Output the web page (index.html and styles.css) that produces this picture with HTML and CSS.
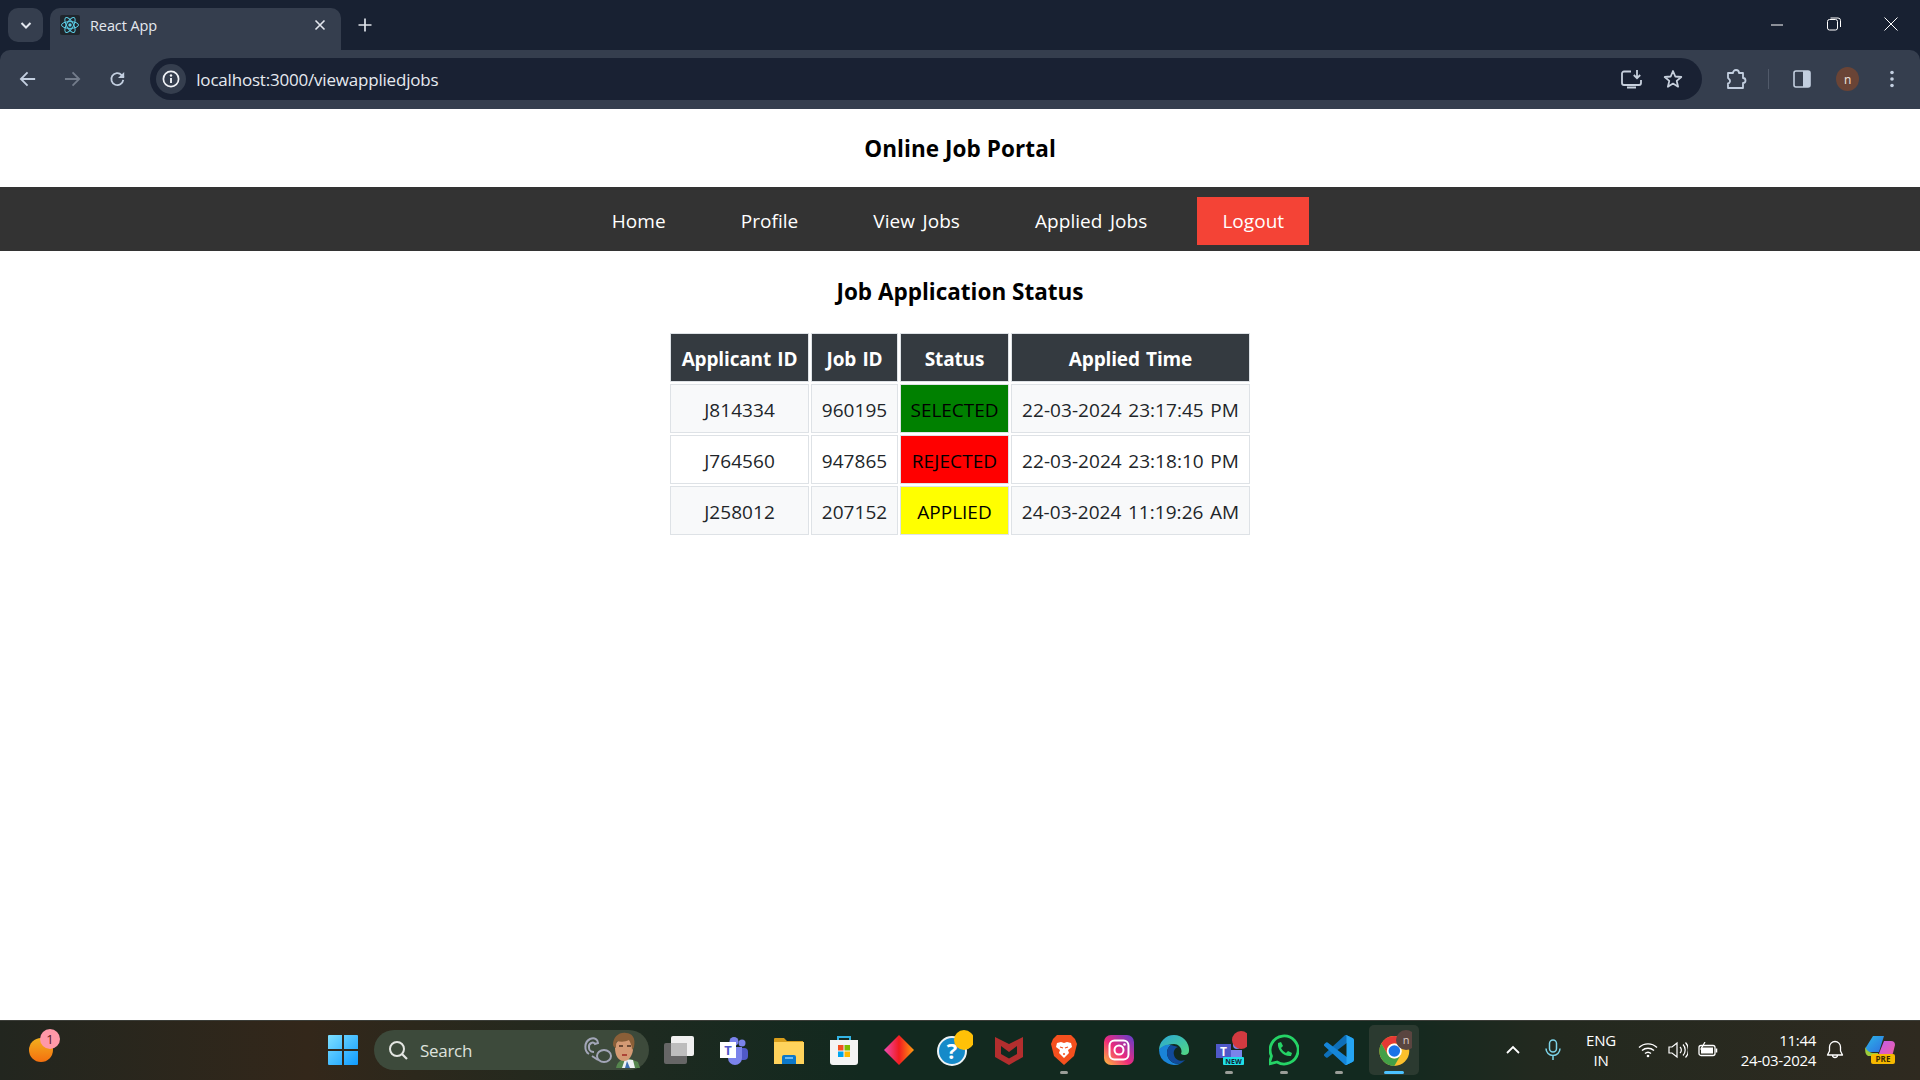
FILE: index.html
```html
<!DOCTYPE html>
<html lang="en">
<head>
<meta charset="utf-8">
<title>React App</title>
<link rel="stylesheet" href="styles.css">
</head>
<body>
<header class="browser">
  <div class="tabstrip">
    <button class="tab-search"><svg width="14" height="14" viewBox="0 0 14 14"><path d="M2.5 5 7 9.5 11.5 5" fill="none" stroke="#e3e7ee" stroke-width="2"/></svg></button>
    <div class="tab">
      <span class="favicon"><svg width="20" height="20" viewBox="0 0 20 20"><rect width="20" height="20" rx="2" fill="#20262c"/><g fill="none" stroke="#5ccfe6" stroke-width="1"><ellipse cx="10" cy="10" rx="8.5" ry="3.4"/><ellipse cx="10" cy="10" rx="8.5" ry="3.4" transform="rotate(60 10 10)"/><ellipse cx="10" cy="10" rx="8.5" ry="3.4" transform="rotate(120 10 10)"/></g><circle cx="10" cy="10" r="1.7" fill="#5ccfe6"/></svg></span>
      <span class="tab-title">React App</span>
      <svg class="tab-close" width="12" height="12" viewBox="0 0 12 12"><path d="M1.5 1.5l9 9M10.5 1.5l-9 9" stroke="#e3e7ee" stroke-width="1.6"/></svg>
    </div>
    <svg class="new-tab" width="14" height="14" viewBox="0 0 14 14"><path d="M7 .5v13M.5 7h13" stroke="#dfe3ea" stroke-width="1.7"/></svg>
    <div class="window-controls">
      <svg width="14" height="14" viewBox="0 0 14 14"><path d="M1 8h12" stroke="#fff"/></svg>
      <svg width="14" height="14" viewBox="0 0 14 14"><rect x=".5" y="2.5" width="10" height="10.5" rx="2" fill="none" stroke="#fff"/><path d="M3.5 1H11a2.5 2.5 0 0 1 2.5 2.5V10" fill="none" stroke="#fff"/></svg>
      <svg width="14" height="14" viewBox="0 0 14 14"><path d="M.5.5l13 13M13.5.5l-13 13" stroke="#fff"/></svg>
    </div>
  </div>
  <div class="toolbar">
    <svg class="nav-btn" width="18" height="18" viewBox="0 0 18 18"><path d="M17 9H2M9 2 2 9l7 7" fill="none" stroke="#c3cfe0" stroke-width="1.9"/></svg>
    <svg class="nav-btn" width="18" height="18" viewBox="0 0 18 18"><path d="M1 9h15M9 2l7 7-7 7" fill="none" stroke="#737c8b" stroke-width="1.9"/></svg>
    <svg class="nav-btn" width="18" height="18" viewBox="0 0 18 18"><path d="M15 10a6.3 6.3 0 1 1-1.7-5.2L15.5 7" fill="none" stroke="#c3cfe0" stroke-width="1.9"/><path d="M16 1.5V8H9.5z" fill="#c3cfe0"/></svg>
    <div class="omnibox">
      <span class="info-bubble"><svg width="18" height="18" viewBox="0 0 18 18"><circle cx="9" cy="9" r="7.6" fill="none" stroke="#f0f2f6" stroke-width="1.7"/><path d="M9 8v5" stroke="#f0f2f6" stroke-width="1.9"/><circle cx="9" cy="5.5" r="1.2" fill="#f0f2f6"/></svg></span>
      <span class="url">localhost:3000/viewappliedjobs</span>
      <svg width="22" height="20" viewBox="0 0 22 20"><path d="M10 2.5H3a2 2 0 0 0-2 2V14a2 2 0 0 0 2 2h15a2 2 0 0 0 2-2v-3" fill="none" stroke="#c7d0dd" stroke-width="1.8"/><path d="M6 18.500h9" stroke="#c7d0dd" stroke-width="2"/><path d="M16 1v8M12.800 6l3.200 3.200L19.200 6" fill="none" stroke="#c7d0dd" stroke-width="1.800"/></svg>
      <svg width="20" height="20" viewBox="0 0 20 20"><path d="M10 2l2.300 5.500 6 .5-4.600 3.900 1.400 5.800L10 14.600 4.900 17.700l1.400-5.800L1.700 8l6-.5z" fill="none" stroke="#c7d0dd" stroke-width="1.800" stroke-linejoin="round"/></svg>
    </div>
    <svg class="tool ext" width="22" height="22" viewBox="0 0 22 22"><path d="M3 5h5a3 3 0 0 1 6 0h4v5a2.500 2.500 0 0 1 0 5v5H3v-4.500a2.500 2.500 0 0 0 1-4.500 2.500 2.500 0 0 0-1-1z" fill="none" stroke="#c3cfe0" stroke-width="1.800" stroke-linejoin="round"/></svg>
    <span class="divider"></span>
    <svg class="tool" width="18" height="18" viewBox="0 0 18 18"><rect x="1" y="1" width="16" height="16" rx="2" fill="none" stroke="#c3cfe0" stroke-width="1.600"/><path d="M10 1h5.500A1.500 1.500 0 0 1 17 2.500v13a1.500 1.500 0 0 1-1.500 1.500H10z" fill="#c3cfe0"/></svg>
    <span class="avatar">n</span>
    <svg class="tool menu" width="6" height="18" viewBox="0 0 6 18"><circle cx="3" cy="2.500" r="1.800" fill="#c3cfe0"/><circle cx="3" cy="9" r="1.800" fill="#c3cfe0"/><circle cx="3" cy="15.500" r="1.800" fill="#c3cfe0"/></svg>
  </div>
</header>

<div class="page">
  <h1 class="site-title">Online Job Portal</h1>
  <nav class="site-nav">
    <a class="nav-link">Home</a>
    <a class="nav-link">Profile</a>
    <a class="nav-link">View Jobs</a>
    <a class="nav-link">Applied Jobs</a>
    <a class="nav-link logout">Logout</a>
  </nav>
  <h2 class="section-title">Job Application Status</h2>
  <table class="jobs">
    <colgroup><col class="c1"><col class="c2"><col class="c3"><col class="c4"></colgroup>
    <thead><tr><th>Applicant ID</th><th>Job ID</th><th>Status</th><th>Applied Time</th></tr></thead>
    <tbody>
      <tr class="odd"><td>J814334</td><td>960195</td><td class="selected">SELECTED</td><td>22-03-2024 23:17:45 PM</td></tr>
      <tr><td>J764560</td><td>947865</td><td class="rejected">REJECTED</td><td>22-03-2024 23:18:10 PM</td></tr>
      <tr class="odd"><td>J258012</td><td>207152</td><td class="applied">APPLIED</td><td>24-03-2024 11:19:26 AM</td></tr>
    </tbody>
  </table>
</div>

<footer class="taskbar">
  <div class="widgets">
    <svg class="over-free" width="36" height="36" viewBox="0 0 36 36"><defs><linearGradient id="wg" x1="0" y1="0" x2="0" y2="1"><stop offset="0" stop-color="#f2b01e"/><stop offset="1" stop-color="#f4700f"/></linearGradient></defs><circle cx="14" cy="18" r="12" fill="url(#wg)"/><circle cx="23" cy="7" r="10" fill="#ff98a8"/><text x="23" y="11.500" class="svg-badge" text-anchor="middle">1</text></svg>
  </div>
  <div class="center">
    <svg class="start" width="30" height="30" viewBox="0 0 30 30"><defs><linearGradient id="win" x1="0" y1="0" x2="1" y2="1"><stop offset="0" stop-color="#7ee0ff"/><stop offset="1" stop-color="#0f9bff"/></linearGradient></defs><path d="M0 1a1 1 0 0 1 1-1h13v14H0zM16 0h13a1 1 0 0 1 1 1v13H16zM0 16h14v14H1a1 1 0 0 1-1-1zM16 16h14v13a1 1 0 0 1-1 1H16z" fill="url(#win)"/></svg>
    <div class="search">
      <svg width="22" height="22" viewBox="0 0 22 22"><circle cx="10" cy="10" r="7" fill="none" stroke="#e4e6e2" stroke-width="2"/><path d="M15 15l5 5" stroke="#e4e6e2" stroke-width="2.200"/></svg>
      <span class="search-text">Search</span>
      <svg class="search-art" width="58" height="36" viewBox="0 0 58 36"><g fill="none" stroke="#a3a6b8" stroke-width="2"><path d="M7 22c-5-3-5-12 1-15 5-2 8 1 8 4l-3 1c-1-3-7-1-6 4 0 3 3 4 5 4"/><ellipse cx="22" cy="24" rx="7" ry="6"/><path d="M10 24l6 4"/></g><path d="M34 36c1-6 5-9 12-10l10 4 2 6z" fill="#55854e"/><path d="M40 36l3-9 8 1 2 8z" fill="#eef1f4"/><path d="M45 29l3 7h-5z" fill="#3f6fb0"/><path d="M33 16c0-6 4-9 10-9s9 4 8 11c-1 6-4 11-9 11-6 0-9-6-9-13z" fill="#d49a74"/><path d="M31 13C31 5 37 0 44 1c6 0 10 5 8 14l-2 3c0-5-2-8-3-10-4 2-8 2-12 1-1 2-1 4-1 7l-2-1z" fill="#8a5f38"/><path d="M37 14h4M45 14h4" stroke="#4a3020" stroke-width="1.400"/><path d="M40 23h5" stroke="#a83a30" stroke-width="1.800"/></svg>
    </div>
    <span class="task"><svg width="30" height="30" viewBox="0 0 30 30"><rect x="0" y="8" width="23" height="21" rx="2" fill="#666"/><rect x="7" y="1" width="23" height="20" rx="2" fill="#f0f0f0"/><rect x="7" y="8" width="16" height="13" fill="#bdbdbd"/></svg></span>
    <span class="task"><svg width="30" height="30" viewBox="0 0 30 30"><circle cx="23" cy="8" r="3.500" fill="#7b83eb"/><rect x="19" y="13" width="10" height="12" rx="4" fill="#5059c9"/><circle cx="15" cy="6.500" r="4.500" fill="#7b83eb"/><path d="M9 12h14v11a7 7 0 0 1-14 0z" fill="#7b83eb"/><rect x="1" y="7" width="16" height="16" fill="#fff"/><text x="9" y="20" class="svg-t" text-anchor="middle">T</text></svg></span>
    <span class="task"><svg width="30" height="30" viewBox="0 0 30 30"><path d="M0 4a1 1 0 0 1 1-1h9l3 3h16v4H0z" fill="#d99e1b"/><path d="M0 7h30v22H0z" fill="#ffd35c"/><path d="M8 29v-7a2 2 0 0 1 2-2h10a2 2 0 0 1 2 2v7z" fill="#0c78c9"/><path d="M11 23h8" stroke="#8fd0ff" stroke-width="1.500"/></svg></span>
    <span class="task"><svg width="30" height="32" viewBox="0 0 30 32"><path d="M9 6V3h12v3" fill="none" stroke="#33b5e5" stroke-width="2"/><path d="M1 6h28v22a3 3 0 0 1-3 3H4a3 3 0 0 1-3-3z" fill="#f4f4f4"/><rect x="9" y="11" width="5.500" height="5.500" fill="#f25022"/><rect x="15.500" y="11" width="5.500" height="5.500" fill="#7fba00"/><rect x="9" y="17.500" width="5.500" height="5.500" fill="#00a4ef"/><rect x="15.500" y="17.500" width="5.500" height="5.500" fill="#ffb900"/></svg></span>
    <span class="task"><svg width="30" height="30" viewBox="0 0 30 30"><defs><linearGradient id="dm" x1="0" y1="0" x2="1" y2="0"><stop offset="0" stop-color="#ee4bb5"/><stop offset=".5" stop-color="#f21c20"/><stop offset="1" stop-color="#ff9c10"/></linearGradient></defs><path d="M15 0l15 15-15 15L0 15z" fill="url(#dm)"/></svg></span>
    <span class="task"><svg class="over" width="38" height="40" viewBox="0 0 38 40"><circle cx="17" cy="23" r="14" fill="#158ac9" stroke="#eef3f5" stroke-width="2"/><text x="17" y="31" class="svg-q" text-anchor="middle">?</text><circle cx="29" cy="12" r="10" fill="#ffc107"/></svg></span>
    <span class="task"><svg width="28" height="30" viewBox="0 0 28 30"><path d="M0 2l14 7 14-7v20l-14 8-14-8z" fill="#b32e2e"/><path d="M6 11l8 6 8-6v8l-8 4.500L6 19z" fill="#12291f"/></svg></span>
    <span class="task on"><svg width="26" height="30" viewBox="0 0 26 30"><path d="M6 0h14l4 4 2 5-3 12-10 9-10-9L0 9l2-5z" fill="#f4501e"/><path d="M6 8l4-1 3 1 3-1 4 1 1 4-4 3 1 3-5 5-5-5 1-3-4-3z" fill="#fff"/><path d="M9 12l3 1M17 12l-3 1M12 19h2" stroke="#f4501e" stroke-width="1.300"/></svg></span>
    <span class="task"><svg width="30" height="30" viewBox="0 0 30 30"><defs><linearGradient id="ig" x1="0" y1="1" x2="1" y2="0"><stop offset="0" stop-color="#ffc13a"/><stop offset=".45" stop-color="#ee2a7b"/><stop offset="1" stop-color="#5b3fd0"/></linearGradient></defs><rect width="30" height="30" rx="7" fill="url(#ig)"/><rect x="5.500" y="5.500" width="19" height="19" rx="5" fill="none" stroke="#fff" stroke-width="2"/><circle cx="15" cy="15" r="4.500" fill="none" stroke="#fff" stroke-width="2"/><circle cx="20.500" cy="9.500" r="1.300" fill="#fff"/></svg></span>
    <span class="task"><svg width="30" height="30" viewBox="0 0 30 30"><defs><linearGradient id="ed" x1="0" y1="0" x2="1" y2="1"><stop offset="0" stop-color="#2aa6d8"/><stop offset="1" stop-color="#52d87f"/></linearGradient></defs><path d="M15 0A15 15 0 0 1 30 16c0 4-5 5-8 3 2-5-2-10-7-10C8 9 2 13 0 15A15 15 0 0 1 15 0z" fill="url(#ed)"/><path d="M0 15c2-4 8-6 12-5-5 3-6 12 1 17 3 2 8 3 12-1A15 15 0 0 1 0 15z" fill="#1a84d8"/><path d="M12 10c-5 3-6 12 1 17 5 3 10 2 13-2-4 2-10 0-11-5-1-4 1-7 4-8z" fill="#114a9a"/></svg></span>
    <span class="task on"><svg class="over" width="36" height="40" viewBox="0 0 36 40"><circle cx="26" cy="17" r="4" fill="#7b83eb"/><path d="M18 22h13v10H18z" fill="#7b83eb"/><rect x="5" y="16" width="15" height="14" fill="#5059c9"/><text x="12.500" y="27.500" class="svg-t light" text-anchor="middle">T</text><rect x="12" y="29" width="21" height="8" rx="1" fill="#1fe0e8"/><text x="22.500" y="35.700" class="svg-new" text-anchor="middle">NEW</text><circle cx="30" cy="12" r="9" fill="#d23a40"/></svg></span>
    <span class="task on"><svg width="30" height="32" viewBox="1 0 30 32"><path d="M1 30l2.500-8A14 14 0 1 1 9 28z" fill="none" stroke="#25d366" stroke-width="2.800" stroke-linejoin="round"/><path d="M10 9l3-1 2 4-2 2c1 2 3 4 5 5l2-2 4 2-1 3c-7 1-14-6-13-13z" fill="#25d366"/></svg></span>
    <span class="task on"><svg width="30" height="30" viewBox="0 0 100 100"><path d="M96.461 10.796L75.857.876a6.230 6.230 0 0 0-7.107 1.207L1.299 63.537a4.167 4.167 0 0 0 .004 6.162l5.510 5.009a4.167 4.167 0 0 0 5.320.236L93.361 13.370c2.720-2.064 6.627-.124 6.627 3.290v-.240a6.250 6.250 0 0 0-3.527-5.624z" fill="#0e6fb8"/><path d="M96.461 89.204l-20.604 9.920a6.230 6.230 0 0 1-7.107-1.207L1.299 36.463a4.167 4.167 0 0 1 .004-6.162l5.510-5.009a4.167 4.167 0 0 1 5.320-.236L93.361 86.630c2.720 2.064 6.627.124 6.627-3.290v.240a6.250 6.250 0 0 1-3.527 5.624z" fill="#1585d8"/><path d="M75.858 99.126a6.232 6.232 0 0 1-7.108-1.210c2.306 2.307 6.250.674 6.250-2.588V4.672c0-3.262-3.944-4.895-6.250-2.589a6.232 6.232 0 0 1 7.108-1.210l20.600 9.908A6.250 6.250 0 0 1 100 16.413v67.174a6.250 6.250 0 0 1-3.541 5.633z" fill="#25a5f3"/></svg></span>
    <span class="task active"><svg class="over" width="36" height="40" viewBox="0 0 36 40"><g transform="translate(2 6.700) scale(.68)"><circle cx="24" cy="24" r="22" fill="#fbc02d"/><path d="M24 2A22 22 0 0 0 4.950 13l9.520 16.500A11 11 0 0 1 24 13h19.050A22 22 0 0 0 24 2z" fill="#e53935"/><path d="M4.950 13A22 22 0 0 0 24 46l9.530-16.500A11 11 0 0 1 14.470 29.500z" fill="#43a047"/><circle cx="24" cy="24" r="11" fill="#fff"/><circle cx="24" cy="24" r="8.500" fill="#1a73e8"/></g><circle cx="30" cy="12" r="10" fill="#5a4540"/><text x="30" y="16" class="svg-n" text-anchor="middle">n</text></svg></span>
  </div>
  <div class="tray">
    <svg width="14" height="10" viewBox="0 0 14 10"><path d="M1 8l6-6 6 6" fill="none" stroke="#fff" stroke-width="1.800"/></svg>
    <svg class="mic" width="16" height="22" viewBox="0 0 16 22"><rect x="4.500" y="1" width="7" height="12" rx="3.500" fill="none" stroke="#7dd3e8" stroke-width="1.500"/><path d="M1 9.500a7 7 0 0 0 14 0M8 16.500V21" fill="none" stroke="#7dd3e8" stroke-width="1.500"/></svg>
    <div class="lang"><span>ENG</span><span>IN</span></div>
    <svg class="wifi" width="20" height="16" viewBox="0 0 20 16"><g fill="none" stroke="#fff" stroke-width="1.400"><path d="M1 5.500a13 13 0 0 1 18 0"/><path d="M4 8.500a9 9 0 0 1 12 0"/><path d="M7 11.500a4.500 4.500 0 0 1 6 0"/></g><circle cx="10" cy="14" r="1.300" fill="#fff"/></svg>
    <svg width="20" height="18" viewBox="0 0 20 18"><path d="M1 6h3l5-4v14l-5-4H1z" fill="none" stroke="#fff" stroke-width="1.200"/><path d="M12 6a4 4 0 0 1 0 6M15 3.500a8 8 0 0 1 0 11M17.500 1.500a11 11 0 0 1 0 15" fill="none" stroke="#fff" stroke-width="1.200"/></svg>
    <svg width="20" height="16" viewBox="0 0 20 16"><rect x="1" y="3.500" width="16" height="10" rx="2" fill="none" stroke="#fff" stroke-width="1.300"/><rect x="3" y="5.500" width="12" height="6" fill="#fff"/><path d="M18.500 6.500v4" stroke="#fff" stroke-width="1.500"/><path d="M7 0L3 7h3L4 11" fill="none" stroke="#fff" stroke-width="1.200"/></svg>
    <div class="clock"><span>11:44</span><span>24-03-2024</span></div>
    <svg class="bell" width="18" height="20" viewBox="0 0 18 20"><path d="M9 1.500a5.500 5.500 0 0 0-5.500 5.500v4L1.500 15h15l-2-4V7A5.500 5.500 0 0 0 9 1.500zM6.500 15a2.500 2.500 0 0 0 5 0" fill="none" stroke="#fff" stroke-width="1.300" stroke-linejoin="round"/></svg>
    <svg class="copilot" width="30" height="28" viewBox="0 0 30 28"><defs><linearGradient id="cp1" x1="0" y1="0" x2="1" y2="1"><stop offset="0" stop-color="#2bb6e8"/><stop offset="1" stop-color="#2f6fe0"/></linearGradient><linearGradient id="cp2" x1="0" y1="0" x2="1" y2="1"><stop offset="0" stop-color="#c05cf0"/><stop offset="1" stop-color="#f25fa0"/></linearGradient></defs><path d="M8 0h11l-5 16H4a3.500 3.500 0 0 1-3.500-4z" fill="url(#cp1)"/><path d="M.5 11c1 4 5 6 9 6h4l-2 3H4C1 20-.5 16 .5 11z" fill="#9ccc3c"/><path d="M19 5h7a4 4 0 0 1 4 4l-2 8a4 4 0 0 1-4 3H13z" fill="url(#cp2)"/><rect x="6" y="18" width="24" height="10" rx="2" fill="#f6b800"/><text x="18" y="26" class="svg-pre" text-anchor="middle">PRE</text></svg>
  </div>
</footer>
</body>
</html>
```

FILE: styles.css
```css
* { box-sizing: border-box; }
html, body { height: 100%; }
body {
  margin: 0;
  height: 100vh;
  display: flex;
  flex-direction: column;
  overflow: hidden;
  background: #fff;
  font-family: "Open Sans", "Noto Sans", sans-serif;
  color: #000;
}

/* browser chrome */
.browser { flex: 0 0 109px; background: #182132; display: flex; flex-direction: column; }
.tabstrip { flex: 0 0 50px; display: flex; align-items: flex-end; padding-left: 8px; }
.tab-search {
  width: 35px; height: 34px; margin-bottom: 8px; padding: 0;
  display: flex; align-items: center; justify-content: center;
  border: 0; border-radius: 10px; background: #353e4e;
}
.tab {
  width: 291px; height: 42px; margin-left: 7px;
  padding: 0 15px 8px 10px;
  display: flex; align-items: center;
  background: #353e4e; border-radius: 10px 10px 0 0;
}
.favicon { display: flex; margin-right: 10px; }
.tab-title { flex: 1; font-size: 14.5px; letter-spacing: -.1px; color: #e4e8ee; }
.new-tab { margin: 0 0 18px 17px; }
.window-controls {
  margin-left: auto; width: 150px; height: 50px; padding: 0 22px 2px 0;
  display: flex; align-items: center; justify-content: space-between;
}
.toolbar {
  flex: 0 0 59px; display: flex; align-items: center;
  padding: 0 25px 1px 19px;
  background: #353e4e; border-radius: 10px 10px 0 0;
}
.nav-btn { margin-right: 28px; }
.nav-btn:nth-of-type(3) { margin-right: 24px; }
.omnibox {
  flex: 0 0 1552px; height: 42px; padding: 0 19px 0 6px;
  display: flex; align-items: center; gap: 20px;
  background: #192133; border-radius: 21px;
}
.info-bubble {
  flex: none; width: 30px; height: 30px; margin-right: -10px;
  display: flex; align-items: center; justify-content: center;
  background: #353e4e; border-radius: 50%;
}
.url { flex: 1; font-size: 17px; letter-spacing: -.2px; color: #e6eaf0; }
.tool { flex: none; }
.ext { margin-left: 23px; }
.divider { width: 1px; height: 20px; margin: 0 24px 0 21px; background: #515a6a; }
.avatar {
  width: 24px; height: 24px; margin-left: 25px;
  display: flex; align-items: center; justify-content: center;
  background: #6a4436; border-radius: 50%;
  font-size: 12px; color: #f2e6e0;
}
.menu { margin-left: 30px; }

/* page */
.page { flex: 1; background: #fff; }
.site-title {
  height: 78px; margin: 0;
  display: flex; align-items: center; justify-content: center;
  font-size: 22.5px; font-weight: 700; letter-spacing: .08px;
}
.site-nav {
  height: 64px; padding: 10px 24px 6px 0;
  display: flex; justify-content: center; gap: 25px;
  background: #333;
}
.nav-link {
  height: 48px; padding: 0 25px;
  display: flex; align-items: center;
  font-size: 19px; letter-spacing: .05px; word-spacing: 2.5px; color: #fff;
}
.logout { background: #f44336; }
.section-title {
  height: 80px; margin: 0;
  display: flex; align-items: center; justify-content: center;
  font-size: 22.5px; font-weight: 700;
}
.jobs {
  table-layout: fixed; width: 584px; margin: 0 auto;
  border-collapse: separate; border-spacing: 2px;
  font-size: 19px; letter-spacing: .05px; word-spacing: 1.5px; color: #212529;
}
.c1 { width: 139px; } .c2 { width: 87px; } .c3 { width: 109px; } .c4 { width: 239px; }
.jobs th, .jobs td { height: 49px; padding: 2px 0 0; border: 1px solid #dee2e6; text-align: center; white-space: nowrap; }
.jobs th { background: #343a40; color: #fff; font-weight: 700; font-size: 19px; letter-spacing: -.15px; word-spacing: 1.5px; }
.odd td { background: #f8f9fa; }
.jobs td.selected { background: #008000; color: #000; letter-spacing: -.05px; }
.jobs td.rejected { background: #f00; color: #000; letter-spacing: .1px; }
.jobs td.applied { background: #ff0; color: #000; letter-spacing: 0; }

/* taskbar */
.taskbar {
  flex: 0 0 60px; display: flex; align-items: center; position: relative;
  padding-bottom: 1px;
  border-top: 1px solid #3b3d38;
  background: linear-gradient(90deg, #22261f 0, #33271a 16%, #1e2a20 33%, #12291f 45%, #12291f 72%, #22291f 80%, #2f2a20 100%);
}
.widgets { width: 328px; padding-left: 27px; display: flex; }
.over-free { overflow: visible; }
.center { display: flex; align-items: center; }
.start { margin-right: 16px; }
.search {
  width: 275px; height: 40px; padding: 0 9px 0 13px;
  display: flex; align-items: center;
  background: #3d4a3b; border-radius: 20px;
}
.search-text { flex: 1; margin-left: 11px; font-size: 17px; letter-spacing: -.3px; color: #dfe2dd; }
.task {
  width: 55px; height: 50px; position: relative;
  display: flex; align-items: center; justify-content: center;
}
.search + .task { margin-left: 2px; }
.over { flex: none; margin-bottom: 5px; }
.on::after, .active::after {
  content: ""; position: absolute; bottom: 1px; left: 50%;
  width: 8px; height: 3px; margin-left: -4px;
  background: #9a9d98; border-radius: 2px;
}
.active { background: #2b3a30; border-radius: 5px; width: 50px; margin-left: 3px; }
.active::after { width: 20px; margin-left: -10px; background: #4cc2ff; }
.tray { flex: 1; display: flex; align-items: center; padding-left: 87px; color: #fff; }
.mic { margin-left: 25px; }
.lang {
  width: 40px; margin-left: 20px; margin-right: 17px;
  display: flex; flex-direction: column; align-items: center;
  font-size: 15px; line-height: 20px; letter-spacing: -.2px;
}
.wifi { margin-right: 10px; }
.tray > svg + svg { flex: none; }
.wifi + svg { margin-right: 10px; }
.clock {
  width: 98px;
  display: flex; flex-direction: column; align-items: flex-end;
  font-size: 15px; line-height: 20px; letter-spacing: -.3px;
}
.bell { margin-left: 10px; }
.copilot { margin-left: 21px; }
.svg-badge { font: 13px "Open Sans", sans-serif; fill: #5a1620; }
.svg-t { font: 700 13px "Open Sans", sans-serif; fill: #5059c9; }
.svg-t.light { fill: #fff; font-size: 12px; }
.svg-q { font: 700 22px "Open Sans", sans-serif; fill: #fff; }
.svg-new { font: 700 7px "Open Sans", sans-serif; fill: #123; }
.svg-n { font: 11px "Open Sans", sans-serif; fill: #d8cbc6; }
.svg-pre { font: 700 8px "Open Sans", sans-serif; fill: #3a2a00; }
```
